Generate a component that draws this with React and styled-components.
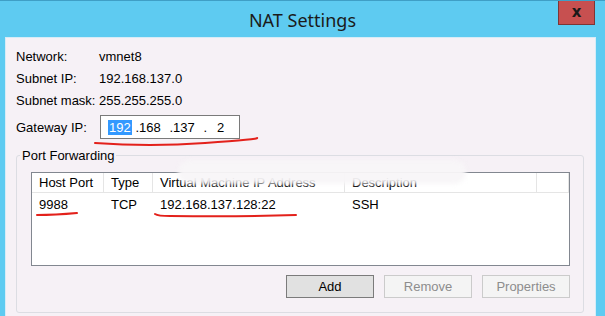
import React from "react";
import styled, { createGlobalStyle } from "styled-components";

const GlobalStyle = createGlobalStyle`
  body {
    margin: 0;
    font-family: "Liberation Sans", Arial, sans-serif;
    font-size: 13px;
    color: #000;
  }
`;

const Window = styled.div`
  position: relative;
  width: 605px;
  height: 316px;
  background: #5ecbf1;
  border-top: 1px solid #3f9fc6;
  box-sizing: border-box;
  display: flex;
  flex-direction: column;
  overflow: hidden;
`;

const TitleBar = styled.div`
  position: relative;
  height: 36px;
  flex-shrink: 0;
  display: flex;
  align-items: center;
  justify-content: center;
`;

const Title = styled.div`
  font-family: "Noto Sans", "Open Sans", sans-serif;
  font-size: 18px;
  color: #1b1b1b;
  margin-top: 1px;
`;

const CloseButton = styled.div`
  position: absolute;
  top: -1px;
  right: 10px;
  width: 37px;
  height: 25px;
  box-sizing: border-box;
  background: #c75050;
  border: 1px solid #7e3535;
  border-top: none;
  display: flex;
  align-items: center;
  justify-content: center;
  font-family: "DejaVu Sans", sans-serif;
  font-weight: bold;
  font-size: 15px;
  color: #1a1a1a;
`;

const Panel = styled.div`
  flex: 1;
  margin: 0 9px 0 5px;
  background: #f6f1f6;
  border: 1px solid #d6ecf7;
  border-bottom: none;
  padding: 7px 11px 3px 9px;
  display: flex;
  flex-direction: column;
`;

const InfoGrid = styled.div`
  display: grid;
  grid-template-columns: 84px 1fr;
  grid-auto-rows: 22px;
  align-items: center;
`;

const Label = styled.div`
  padding-left: 1px;
  width: ${(p) => p.$width || "auto"};
`;

const GatewayRow = styled.div`
  display: flex;
  align-items: center;
  height: 24px;
  margin-top: 4px;
`;

const IpBox = styled.div`
  width: 140px;
  height: 24px;
  box-sizing: border-box;
  border: 1px solid #7a7a7a;
  background: #fff;
  display: flex;
  align-items: center;
  padding-left: 4px;
`;

// each octet sits left in its slot; the offset varies per octet
const IpField = styled.span`
  width: 28px;
  box-sizing: border-box;
  padding-left: ${(p) => p.$pad}px;
`;

const IpDot = styled.span`
  width: 6px;
  text-align: right;
`;

const Selected = styled.span`
  background: #3399ff;
  color: #fff;
  padding: 0 1px;
`;

const Group = styled.fieldset`
  flex: 1;
  margin: 9px 0 0 1px;
  border: 1px solid #dcdde3;
  border-radius: 3px;
  padding: 9px 12px 14px 14px;
  display: flex;
  flex-direction: column;
  min-width: 0;
`;

const Legend = styled.legend`
  padding: 0 2px;
  margin-left: -11px;
  line-height: 15px;
`;

const ListBox = styled.div`
  height: 94px;
  box-sizing: border-box;
  border: 1px solid #828790;
  background: #fff;
  margin-right: 1px;
`;

const Row = styled.div`
  display: grid;
  grid-template-columns: 72px 49px 192px 192px 1fr;
  height: ${(p) => (p.$header ? "20px" : "22px")};
  align-items: center;
`;

const HeadCell = styled.div`
  height: 100%;
  display: flex;
  align-items: center;
  padding-left: 7px;
  border-right: 1px solid #e5e5e5;
  border-bottom: 1px solid #e5e5e5;
  box-sizing: border-box;
  white-space: nowrap;
  overflow: hidden;
`;

const Cell = styled.div`
  padding-left: 7px;
  white-space: nowrap;
`;

const ButtonRow = styled.div`
  display: flex;
  justify-content: flex-end;
  gap: 10px;
  margin-top: 9px;
  margin-right: 1px;
`;

const Button = styled.div`
  width: 88px;
  height: 23px;
  box-sizing: border-box;
  display: flex;
  align-items: center;
  justify-content: center;
  border: 1px solid ${(p) => (p.$disabled ? "#cbcbcb" : "#7b7b7b")};
  background: ${(p) => (p.$disabled ? "#f4f4f4" : "#e1e1e1")};
  color: ${(p) => (p.$disabled ? "#8d8d8d" : "#000")};
`;

const Smudge = styled.div`
  position: absolute;
  left: 178px;
  top: 159px;
  width: 288px;
  height: 24px;
  border-radius: 12px;
  background: rgba(248, 246, 248, 0.95);
  filter: blur(2px);
  pointer-events: none;
`;

const Marks = styled.svg`
  position: absolute;
  left: 0;
  top: 0;
  pointer-events: none;
`;

const columns = ["Host Port", "Type", "Virtual Machine IP Address", "Description", ""];

export default function App() {
  return (
    <>
      <GlobalStyle />
      <Window>
        <TitleBar>
          <Title>NAT Settings</Title>
          <CloseButton>x</CloseButton>
        </TitleBar>
        <Panel>
          <InfoGrid>
            <Label>Network:</Label>
            <div>vmnet8</div>
            <Label>Subnet IP:</Label>
            <div>192.168.137.0</div>
            <Label>Subnet mask:</Label>
            <div>255.255.255.0</div>
          </InfoGrid>
          <GatewayRow>
            <Label $width="84px">Gateway IP:</Label>
            <IpBox>
              <IpField $pad={3}><Selected>192</Selected></IpField>
              <IpDot>.</IpDot>
              <IpField $pad={0}>168</IpField>
              <IpDot>.</IpDot>
              <IpField $pad={0}>137</IpField>
              <IpDot>.</IpDot>
              <IpField $pad={10}>2</IpField>
            </IpBox>
          </GatewayRow>
          <Group>
            <Legend>Port Forwarding</Legend>
            <ListBox>
              <Row $header>
                {columns.map((c, i) => (
                  <HeadCell key={i}>{c}</HeadCell>
                ))}
              </Row>
              <Row>
                <Cell>9988</Cell>
                <Cell>TCP</Cell>
                <Cell>192.168.137.128:22</Cell>
                <Cell>SSH</Cell>
                <Cell />
              </Row>
            </ListBox>
            <ButtonRow>
              <Button>Add</Button>
              <Button $disabled>Remove</Button>
              <Button $disabled>Properties</Button>
            </ButtonRow>
          </Group>
        </Panel>
        <Smudge />
        <Marks width="605" height="316">
          <g fill="none" stroke="#e3211b" strokeWidth="2" strokeLinecap="round">
            <path d="M95 142 Q 150 146 205 142 T 257 137" />
            <path d="M37 214 Q 55 214 77 212" />
            <path d="M155 213 Q 158 215 170 215 Q 240 216 296 214" />
          </g>
        </Marks>
      </Window>
    </>
  );
}
